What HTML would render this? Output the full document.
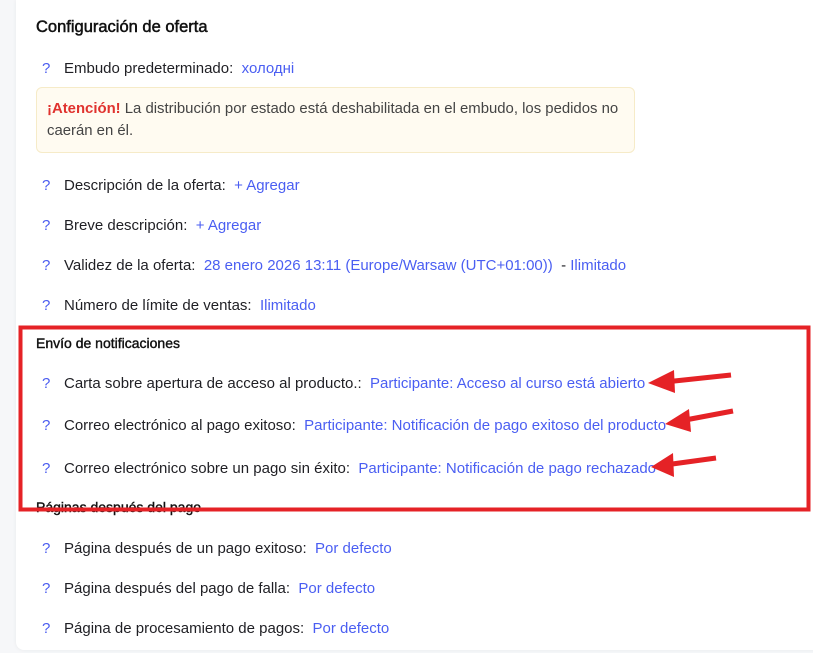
<!DOCTYPE html>
<html><head><meta charset="utf-8"><style>
body{margin:0;width:813px;height:653px;background:#f6f7f9;font-family:"Liberation Sans","DejaVu Sans",sans-serif;overflow:hidden;position:relative}
.card{position:absolute;left:16px;top:0;width:820px;height:650px;background:#fff;border-radius:0 0 8px 8px;box-shadow:0 0 4px rgba(0,0,0,.06)}
.t{position:absolute;white-space:nowrap;font-size:15px;color:#1f1f24;line-height:20px}
.q{color:#4a5cf0;font-size:15px}
.l{color:#4a5ef2}
h1{position:absolute;left:36px;top:18px;margin:0;font-size:16.5px;font-weight:normal;-webkit-text-stroke:0.5px #111;color:#111;}
.h{font-size:14px;color:#111;-webkit-text-stroke:0.4px #111;line-height:16px}
.alert{position:absolute;left:36px;top:87px;width:597px;height:64px;background:#fffbf1;border:1px solid #f6ebc8;border-radius:6px}
</style></head><body>
<div class="card"></div>
<h1>Configuración de oferta</h1>
<div class="t" style="left:42px;top:59px"><span class="q">?</span></div><div class="t" style="left:64px;top:59px">Embudo predeterminado:&nbsp; <span class="l">холодні</span></div>
<div class="alert"></div>
<div class="t" style="left:47px;top:98px;color:#444;line-height:22px;font-size:14.9px"><span style="color:#e0322e;font-weight:bold">¡Atención!</span> La distribución por estado está deshabilitada en el embudo, los pedidos no<br>caerán en él.</div>
<div class="t" style="left:42px;top:176px"><span class="q">?</span></div><div class="t" style="left:64px;top:176px">Descripción de la oferta:&nbsp; <span class="l">+ Agregar</span></div>
<div class="t" style="left:42px;top:216px"><span class="q">?</span></div><div class="t" style="left:64px;top:216px">Breve descripción:&nbsp; <span class="l">+ Agregar</span></div>
<div class="t" style="left:42px;top:256px"><span class="q">?</span></div><div class="t" style="left:64px;top:256px">Validez de la oferta:&nbsp; <span class="l">28 enero 2026 13:11 (Europe/Warsaw (UTC+01:00))</span>&nbsp; - <span class="l">Ilimitado</span></div>
<div class="t" style="left:42px;top:296px"><span class="q">?</span></div><div class="t" style="left:64px;top:296px">Número de límite de ventas:&nbsp; <span class="l">Ilimitado</span></div>
<div class="t h" style="left:36px;top:335px">Envío de notificaciones</div>
<div class="t" style="left:42px;top:374px"><span class="q">?</span></div><div class="t" style="left:64px;top:374px">Carta sobre apertura de acceso al producto.:&nbsp; <span class="l">Participante: Acceso al curso está abierto</span></div>
<div class="t" style="left:42px;top:416px"><span class="q">?</span></div><div class="t" style="left:64px;top:416px">Correo electrónico al pago exitoso:&nbsp; <span class="l">Participante: Notificación de pago exitoso del producto</span></div>
<div class="t" style="left:42px;top:459px"><span class="q">?</span></div><div class="t" style="left:64px;top:459px">Correo electrónico sobre un pago sin éxito:&nbsp; <span class="l">Participante: Notificación de pago rechazado</span></div>
<div class="t h" style="left:36px;top:499px">Páginas después del pago</div>
<div class="t" style="left:42px;top:539px"><span class="q">?</span></div><div class="t" style="left:64px;top:539px">Página después de un pago exitoso:&nbsp; <span class="l">Por defecto</span></div>
<div class="t" style="left:42px;top:579px"><span class="q">?</span></div><div class="t" style="left:64px;top:579px">Página después del pago de falla:&nbsp; <span class="l">Por defecto</span></div>
<div class="t" style="left:42px;top:619px"><span class="q">?</span></div><div class="t" style="left:64px;top:619px">Página de procesamiento de pagos:&nbsp; <span class="l">Por defecto</span></div>
<svg style="position:absolute;left:0;top:0" width="813" height="653">
<rect x="20.5" y="327.5" width="788" height="182" fill="none" stroke="#e52226" stroke-width="4"/>
<g fill="#e52226" stroke="#e52226">
<line x1="731" y1="375" x2="665" y2="382" stroke-width="5"/><polygon points="648,383 674,370 675,393" stroke="none"/>
<line x1="733" y1="411" x2="680" y2="421" stroke-width="5"/><polygon points="665,424 689,409 691,432" stroke="none"/>
<line x1="716" y1="458" x2="665" y2="465" stroke-width="5"/><polygon points="651,467 673,453 674,477" stroke="none"/>
</g></svg>
</body></html>
